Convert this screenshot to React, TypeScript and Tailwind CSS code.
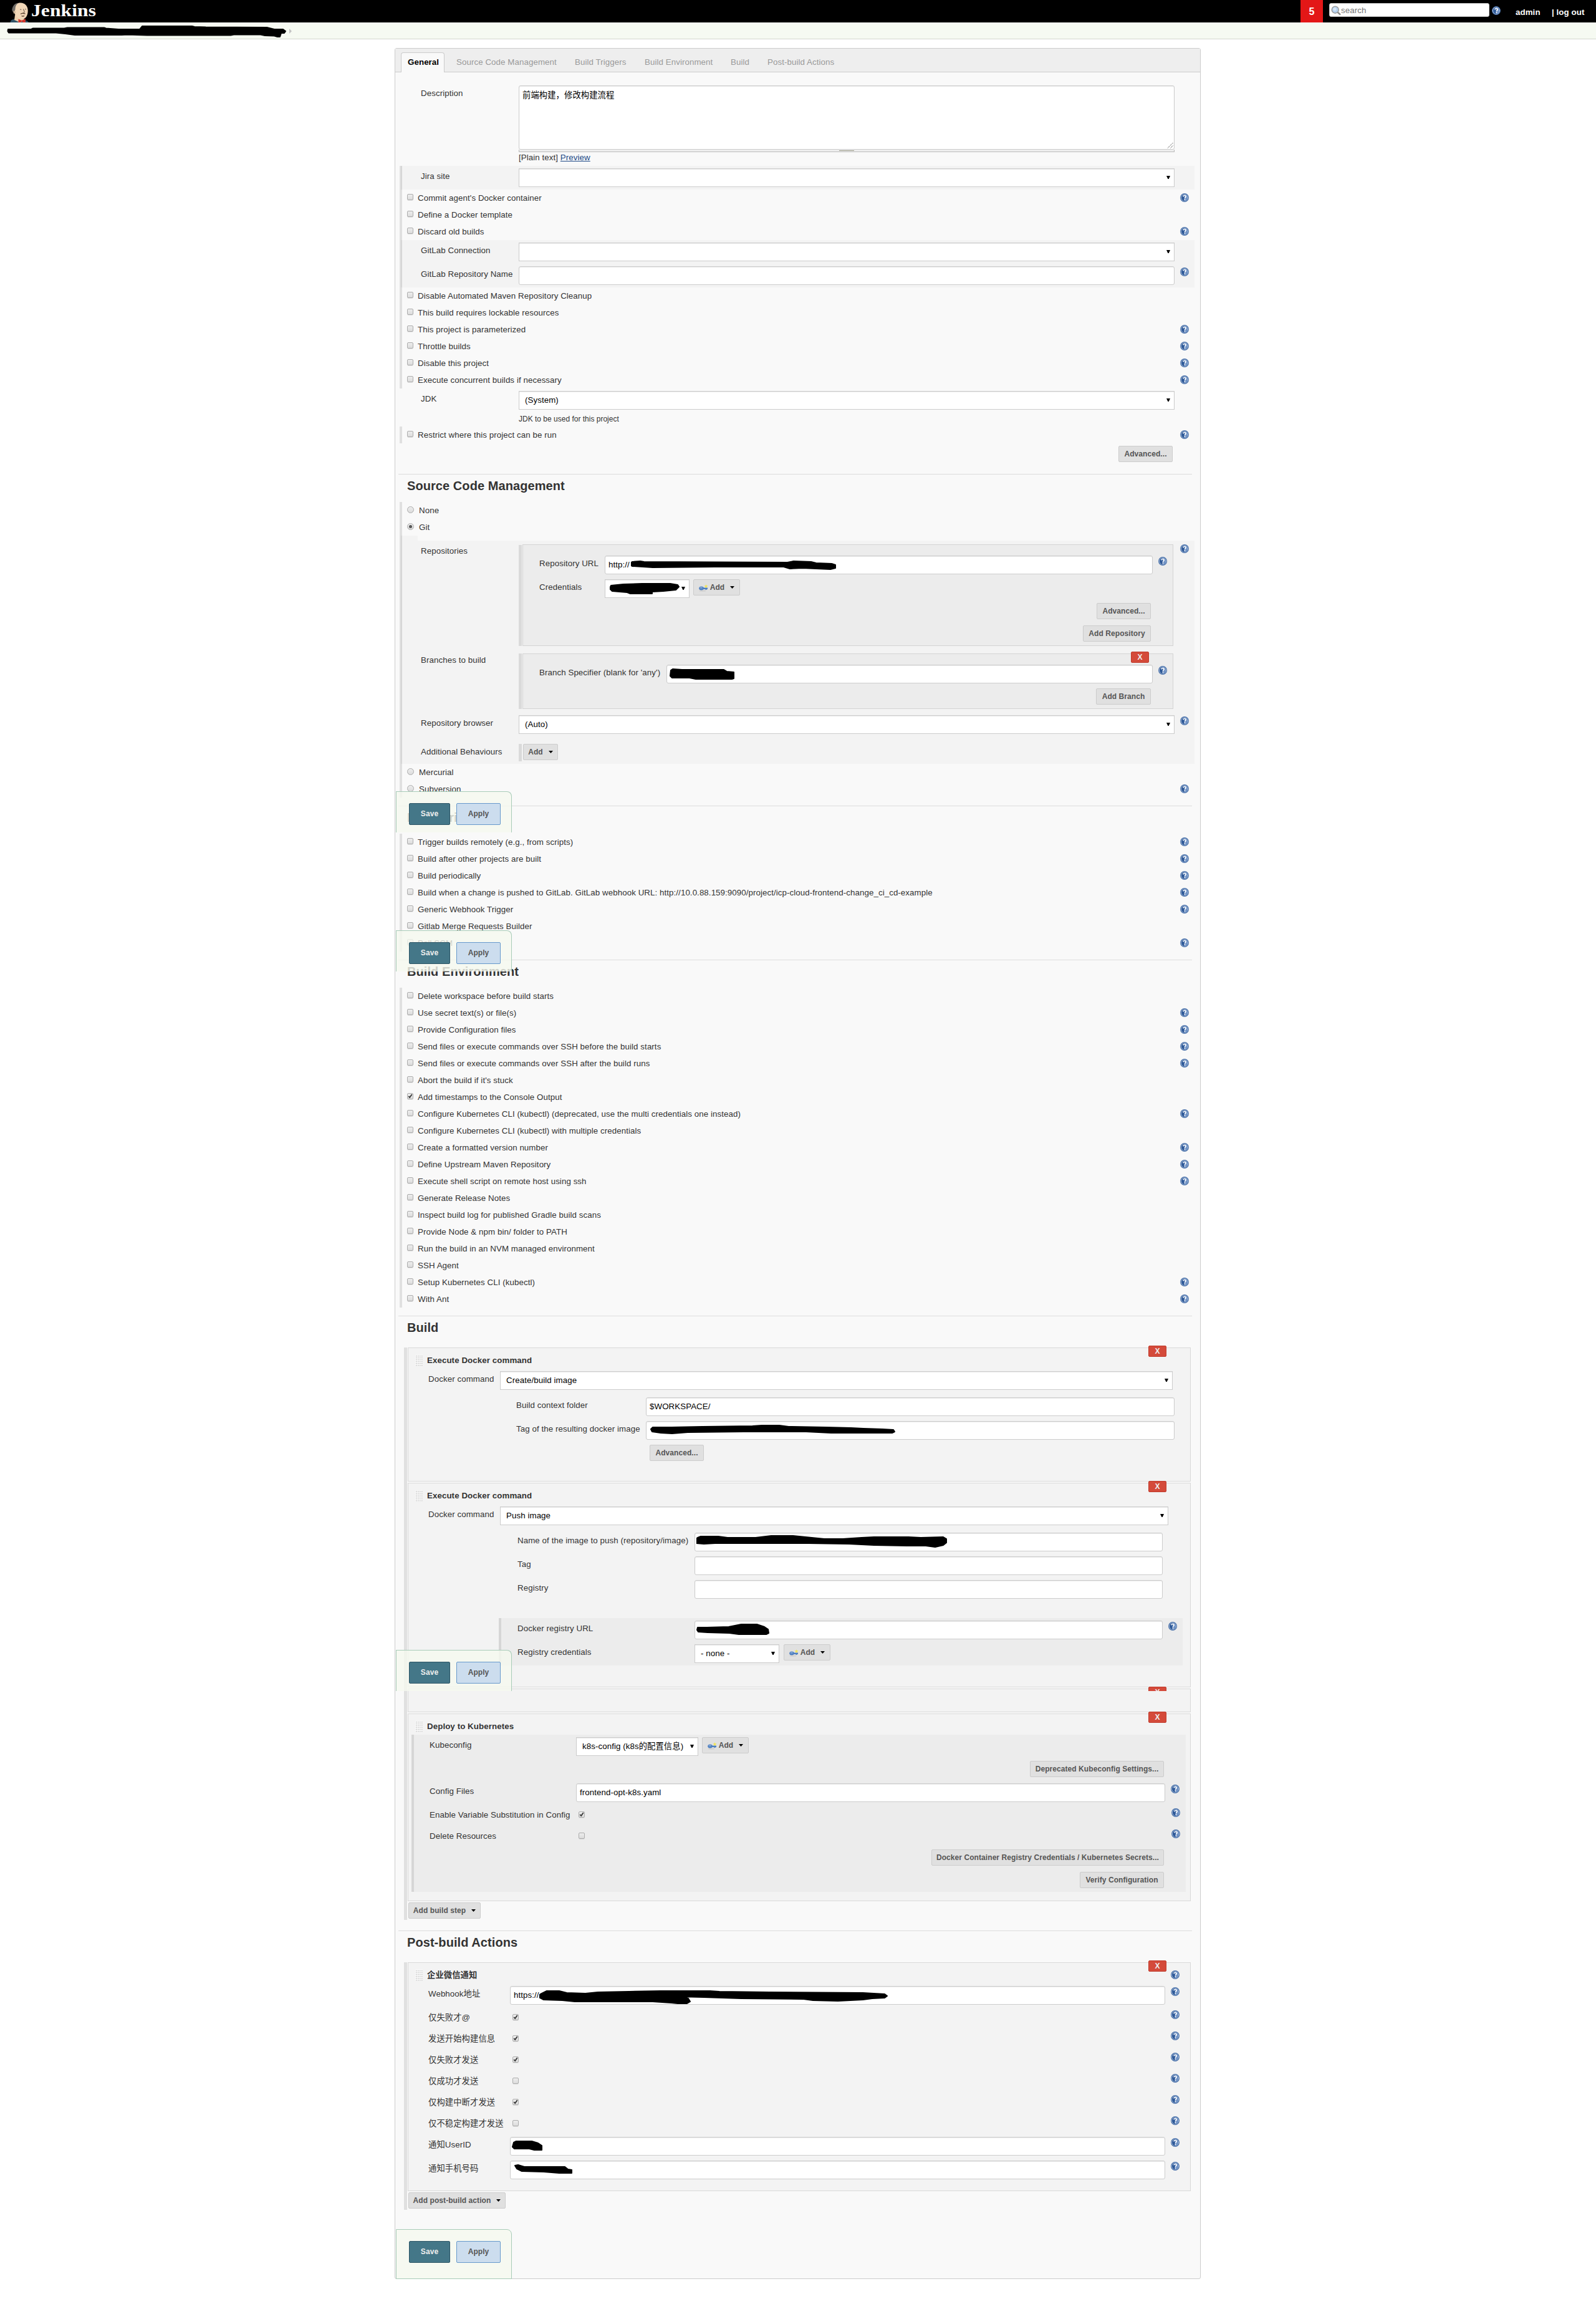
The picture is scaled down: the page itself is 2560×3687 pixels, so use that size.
import React from "react";

type Kids = { children?: React.ReactNode };

function Help({ className = "mt-1.5" }: { className?: string }) {
  return (
    <svg viewBox="0 0 16 16" className={"size-3.5 shrink-0 " + className}>
      <circle cx="8" cy="8" r="7.300" fill="#dfe8f4" stroke="#3f69a5" strokeWidth="1.300" />
      <circle cx="8" cy="8" r="5.900" fill="#2f5a99" />
      <path d="M8 2.100a5.900 5.900 0 0 1 5.900 5.900A5.900 5.900 0 0 1 8 13.900z" fill="#7093c6" />
      <path
        d="M5.700 6.200C5.800 4.700 6.800 4 8.100 4c1.400 0 2.400.8 2.400 2 0 1.500-2.100 1.700-2.100 3.300"
        fill="none"
        stroke="#fff"
        strokeWidth="1.800"
      />
      <rect x="7.400" y="10.500" width="2" height="1.900" fill="#fff" />
    </svg>
  );
}

function Checkbox({ checked, className = "" }: { checked?: boolean; className?: string }) {
  return (
    <span
      className={
        "flex size-2.5 shrink-0 items-center justify-center rounded-[2px] border border-[#acacac] bg-linear-to-b from-[#ededed] to-[#dcdcdc] shadow-[0_1px_0_rgba(0,0,0,0.08)] " +
        className
      }
    >
      {checked && (
        <svg viewBox="0 0 9 9" className="size-2 shrink-0">
          <path d="M1.400 4.500 3.600 6.900 7.600 1.200" fill="none" stroke="#333" strokeWidth="2" />
        </svg>
      )}
    </span>
  );
}

function Radio({ checked }: { checked?: boolean }) {
  return (
    <span className="mt-[7px] ml-2 flex size-[11px] shrink-0 items-center justify-center rounded-full border border-[#acacac] bg-linear-to-b from-[#ededed] to-[#dcdcdc]">
      {checked && <span className="size-[5px] rounded-full bg-[#555]" />}
    </span>
  );
}

function CheckRow({ text, help, checked }: { text: string; help?: boolean; checked?: boolean }) {
  return (
    <div className="flex h-[27px] items-start border-l-2 border-[#e0e0e0]">
      <Checkbox checked={checked} className="mt-[7px] ml-2" />
      <span className="ml-[7px] pt-[5px]">{text}</span>
      {help && <Help className="mt-1.5 mr-[9px] ml-auto" />}
    </div>
  );
}

function RadioRow({ text, help, checked }: { text: string; help?: boolean; checked?: boolean }) {
  return (
    <div className="flex h-[27px] items-start border-l-2 border-[#e0e0e0]">
      <Radio checked={checked} />
      <span className="ml-2 pt-[5px]">{text}</span>
      {help && <Help className="mt-1.5 mr-[9px] ml-auto" />}
    </div>
  );
}

function Input({ className, children }: { className: string } & Kids) {
  return (
    <div
      className={
        "mt-1 flex h-[30px] shrink-0 items-start rounded-[3px] border border-[#ccc] bg-white pt-[5px] pl-[5px] text-black shadow-[inset_0_1px_1px_rgba(0,0,0,0.09)] " +
        className
      }
    >
      {children}
    </div>
  );
}

function Select({ className, children }: { className: string } & Kids) {
  return (
    <div
      className={
        "mt-1 flex h-[30px] shrink-0 items-start border border-[#ccc] bg-white pt-[5px] pr-1.5 pl-[9px] text-black shadow-[inset_0_1px_1px_rgba(0,0,0,0.09)] " +
        className
      }
    >
      {children}
      <svg viewBox="0 0 6 5" className="mt-1.5 ml-auto h-[5px] w-1.5 shrink-0">
        <path d="M0 0h6L3.700 5H2.300z" fill="#000" />
      </svg>
    </div>
  );
}

function Caret({ className }: { className: string }) {
  return (
    <svg viewBox="0 0 7 4" className={"h-1 w-[7px] shrink-0 " + className}>
      <path d="M0 0h7L3.500 4z" fill="#000" />
    </svg>
  );
}

function Button({ className, children }: { className: string } & Kids) {
  return (
    <button
      className={
        "flex h-[26px] shrink-0 items-center justify-center rounded-[2px] border border-[#ccc] bg-[#e0e0e0] text-[12px] font-bold whitespace-nowrap text-[#555] " +
        className
      }
    >
      {children}
    </button>
  );
}

function AddKeyButton({ className = "" }: { className?: string }) {
  return (
    <Button className={"mt-1 w-[75px] " + className}>
      <svg viewBox="0 0 15 13" className="mt-0.5 h-[13px] w-[15px] shrink-0">
        <ellipse cx="6" cy="10.500" rx="5.500" ry="1.200" fill="#cfcfcf" />
        <path d="M6 5.500h8v2.400h-1.500v1h-2v-1H6z" fill="#4d7fc0" />
        <ellipse cx="4" cy="6.500" rx="3.800" ry="2.900" fill="#4d7fc0" />
        <ellipse cx="3.700" cy="5.700" rx="2.300" ry="1.100" fill="#86a9d6" />
        <path d="m11.500.2.900 1.900 2.100.4-1.600 1.300.300 2-1.700-1-1.800 1 .4-2L8.600 2.500l2-.4z" fill="#f0e45a" />
      </svg>
      <span className="ml-[3px]">Add</span>
      <Caret className="ml-[9px]" />
    </Button>
  );
}

function Scribble({ box, d, className }: { box: string; d: string; className: string }) {
  return (
    <svg viewBox={box} className={"shrink-0 " + className}>
      <path d={d} fill="#000" stroke="#000" strokeWidth="2" strokeLinejoin="round" />
    </svg>
  );
}

function Field({
  label,
  labelClass,
  rowClass = "h-[38px]",
  children,
}: { label?: string; labelClass: string; rowClass?: string } & Kids) {
  return (
    <div className={"flex items-start " + rowClass}>
      <span className={"shrink-0 pt-2 " + labelClass}>{label}</span>
      {children}
    </div>
  );
}

function Remove({ className = "h-[18px]" }: { className?: string }) {
  return (
    <div className={"absolute -top-1 right-[38px] w-[29px] overflow-hidden " + className}>
      <div className="flex h-[18px] items-center justify-center rounded-[2px] border border-[#c03b2c] bg-[#d44a3a] text-[12px] leading-none font-bold text-[#eee]">
        X
      </div>
    </div>
  );
}

function Grip() {
  return (
    <svg viewBox="0 0 12 18" className="mt-[11px] ml-[11px] h-[18px] w-3 shrink-0">
      <defs>
        <pattern id="grip" width="3" height="3" patternUnits="userSpaceOnUse">
          <rect width="3" height="3" fill="#fafafa" />
          <rect x="1" y="1" width="1.500" height="1.500" fill="#c4c4c4" />
        </pattern>
      </defs>
      <rect width="12" height="18" fill="url(#grip)" />
    </svg>
  );
}

function Step({ title, className, help, children }: { title?: string; className: string; help?: boolean } & Kids) {
  return (
    <div className={"relative w-[1256px] border border-[#d9d9d9] bg-[#f3f3f3] " + className}>
      {title && (
        <div className="flex h-[33px] items-start">
          <Grip />
          <b className="ml-[7px] pt-[11px]">{title}</b>
          {help && <Help className="mt-3 mr-[17px] ml-auto" />}
        </div>
      )}
      {children}
    </div>
  );
}

function Heading({ children }: Kids) {
  return (
    <div className="ml-[5px] h-[45px] w-[1273px] border-t border-[#ddd] pt-[7px] pl-3.5">
      <h2 className="text-[20px] leading-[23px] font-bold">{children}</h2>
    </div>
  );
}

function SaveBar({ className }: { className: string }) {
  return (
    <div
      className={
        "flex w-[186px] items-start rounded-tr-lg border-t border-r border-l border-[#a8ccb8] bg-[#f5f9ef]/80 pt-[18px] pl-5 " +
        className
      }
    >
      <button className="flex h-[35px] w-[66px] items-center justify-center rounded-[2px] border border-[#2c5566] bg-[#447788] text-[12px] font-bold text-[#eee]">
        Save
      </button>
      <button className="ml-2.5 flex h-[35px] w-[71px] items-center justify-center rounded-[2px] border border-[#6699cc] bg-[#ccddee] text-[12px] font-bold text-[#555]">
        Apply
      </button>
    </div>
  );
}

function Header() {
  return (
    <header className="flex h-9 items-start bg-black text-white">
      <svg viewBox="16 0 144 36" className="ml-4 h-9 w-36 shrink-0">
        <path d="M16.500 36c.3-3.300 2.800-4.600 6.500-5.500l12 1.500c5 .4 9.500.8 11 4z" fill="#2f5266" />
        <path d="M24 24l-1 8 9 4 7-3-1-6z" fill="#ecd0ae" />
        <path d="M22 12C23 6.500 28 4.600 33 4.600c7 0 11.500 5 11.700 12 .2 6.500-2.500 13.900-8.700 13.900-6.500 0-11.500-4.500-13-10z" fill="#f0d6b7" />
        <path d="M22.500 20c-3-1-4-4-2.500-7.500C21.500 8 25 5 29.500 4.800 25.500 7.500 24.500 11 24.500 15z" fill="#6d6a66" />
        <path d="M21.300 17.500c1.400-.6 2.700.5 2.700 2.300s-1 2.400-2 1.700z" fill="#f0d6b7" stroke="#6b5a48" strokeWidth=".6" />
        <path d="M37.500 14.500c.5 2 2 4 1.500 5.500-.4 1-1.700.9-2.500.5M32 15.500c.8-.6 1.700-.5 2.300 0M40 15c.8-.5 1.500-.4 2 .1" fill="none" stroke="#4a3a2c" strokeWidth=".9" />
        <path d="M33 22.500c2-1.500 5-1.300 7.500-.3M34.500 25.500c1.500.7 3.300.6 4.500-.2" fill="none" stroke="#5b4331" strokeWidth="1.300" />
        <path d="M29.500 30.500l5 2.200 1.500-.5 5-2-.2 5.800h-4l-1.800-2-2 2h-3.500z" fill="#d0352b" />
        <text
          x="50"
          y="25.500"
          fontSize="27.500"
          fontWeight="bold"
          fontFamily="Liberation Serif, serif"
          fill="#fff"
          textLength="104"
          lengthAdjust="spacingAndGlyphs"
        >
          Jenkins
        </text>
      </svg>
      <div className="ml-auto flex h-9 w-9 shrink-0 items-center justify-center bg-[#e31717] text-[16px] font-bold">5</div>
      <div className="mt-[5px] ml-2.5 flex h-[22px] w-[257px] shrink-0 items-start rounded-[3px] border border-[#ccc] bg-white pt-[3px] pl-0.5">
        <svg viewBox="0 0 16 16" className="size-4 shrink-0">
          <path d="m10.500 10.500 3.700 3.400" stroke="#8b8b8b" strokeWidth="2.600" strokeLinecap="round" />
          <circle cx="6.700" cy="6.700" r="5.500" fill="#b4d0ee" stroke="#9a9a9a" strokeWidth="1.500" />
          <circle cx="6" cy="5.800" r="2.600" fill="#d6e6f7" />
        </svg>
        <span className="-mt-px text-[#757575]">search</span>
      </div>
      <Help className="mt-2.5 ml-1" />
      <b className="mt-[11px] ml-6 w-[58px] shrink-0">admin</b>
      <b className="mt-[11px] w-[71px] shrink-0">| log out</b>
    </header>
  );
}

function GeneralSection() {
  return (
    <>
      <div className="mt-[17px] flex h-[133px] items-start">
        <span className="w-[198px] shrink-0 pt-2 pl-[41px]">Description</span>
        <div className="mt-1 w-[1052px] shrink-0">
          <div className="flex h-[103px] items-start justify-between rounded-[3px] border border-[#ccc] bg-white pt-1.5 pl-[5px] text-black shadow-[inset_0_1px_1px_rgba(0,0,0,0.09)]">
            <span>前端构建，修改构建流程</span>
            <svg viewBox="0 0 10 10" className="mr-px mb-px size-2.5 self-end">
              <path d="M1 9.500 9.500 1M5.500 9.500l4-4" stroke="#555" strokeWidth="1" strokeDasharray="1.400 .7" />
            </svg>
          </div>
          <div className="flex h-1 items-start justify-center border-x border-b border-[#bbb] bg-[#eee]">
            <span className="mt-px h-px w-6 bg-[#999988]" />
          </div>
          <div>
            [Plain text] <a className="text-[#204a87] underline">Preview</a>
          </div>
        </div>
      </div>

      <div className="ml-[7px] w-[1275px] border-l-2 border-[#e0e0e0]">
        <div className="border-l-2 border-[#d6d6d6] bg-[#f3f3f3]">
          <Field label="Jira site" labelClass="w-[187px] pl-[30px]">
            <Select className="w-[1052px]" />
          </Field>
        </div>
        <CheckRow text="Commit agent's Docker container" help />
        <CheckRow text="Define a Docker template" />
        <CheckRow text="Discard old builds" help />
        <div className="border-l-2 border-[#d6d6d6] bg-[#f3f3f3]">
          <Field label="GitLab Connection" labelClass="w-[187px] pl-[30px]">
            <Select className="w-[1052px]" />
          </Field>
          <Field label="GitLab Repository Name" labelClass="w-[187px] pl-[30px]">
            <Input className="w-[1052px]" />
            <Help className="mt-1.5 ml-[9px]" />
          </Field>
        </div>
        <CheckRow text="Disable Automated Maven Repository Cleanup" />
        <CheckRow text="This build requires lockable resources" />
        <CheckRow text="This project is parameterized" help />
        <CheckRow text="Throttle builds" help />
        <CheckRow text="Disable this project" help />
        <CheckRow text="Execute concurrent builds if necessary" help />
      </div>
      <Field label="JDK" labelClass="w-[198px] pl-[41px]">
        <Select className="w-[1052px]">(System)</Select>
      </Field>
      <div className="h-[23px] pt-1 pl-[198px] text-[12px] leading-[14px] tracking-normal">JDK to be used for this project</div>
      <div className="ml-[7px] w-[1275px] border-l-2 border-[#e0e0e0]">
        <CheckRow text="Restrict where this project can be run" help />
      </div>
      <div className="flex h-[49px] w-[1247px] items-start justify-end pt-1">
        <Button className="w-[87px]">Advanced...</Button>
      </div>
    </>
  );
}

function ScmSection() {
  return (
    <>
      <Heading>Source Code Management</Heading>
      <div className="ml-[7px] w-[1275px] border-l-2 border-[#e0e0e0]">
        <RadioRow text="None" />
        <RadioRow text="Git" checked />
        <div className="border-l-2 border-[#d6d6d6]">
          <div className="h-2 w-[25px] bg-[#f3f3f3]" />
          <div className="h-[358px] bg-[#f3f3f3]">
            <Field label="Repositories" labelClass="w-[187px] pl-[30px]" rowClass="h-[175px]">
              <div className="mt-[7px] h-[162px] w-[5px] shrink-0 bg-[#dadada]" />
              <div className="mt-1.5 ml-px h-[163px] w-[1044px] shrink-0 border border-[#d3d3d3] bg-[#ececec] pt-[13px]">
                <Field label="Repository URL" labelClass="w-[131px] pl-[26px]">
                  <Input className="w-[879px]">
                    http://
                    <Scribble
                      className="ml-0.5 h-[18px] w-[332px]"
                      box="1010 898 332 18"
                      d="M1012 902l13-1 6 1 230 1 10-2 28 1 8 2 25 1 6 2 0 5-8 2-45-2-20 1-10-3-110 0-100 1-33-2-4-3z"
                    />
                  </Input>
                  <Help className="mt-1.5 ml-[9px]" />
                </Field>
                <Field label="Credentials" labelClass="w-[131px] pl-[26px]">
                  <Select className="w-[136px]">
                    <Scribble
                      className="-mt-px -ml-0.5 h-5 w-[113px]"
                      box="977 936 113 20"
                      d="M979 941l20-2 30-1 45 0 12 2 2 3-5 5-20 2-18 1 0 3-35 0-5-2-24-2-4-4z"
                    />
                  </Select>
                  <AddKeyButton className="ml-1.5" />
                </Field>
                <div className="flex h-9 justify-end pt-1 pr-[35px]">
                  <Button className="w-[87px]">Advanced...</Button>
                </div>
                <div className="flex h-9 justify-end pt-1 pr-[35px]">
                  <Button className="w-[109px]">Add Repository</Button>
                </div>
              </div>
              <Help className="mt-1.5 ml-[11px]" />
            </Field>
            <Field label="Branches to build" labelClass="w-[187px] pl-[30px]" rowClass="h-[101px]">
              <div className="mt-1.5 h-[89px] w-[5px] shrink-0 bg-[#dadada]" />
              <div className="relative mt-1.5 ml-px h-[89px] w-[1044px] shrink-0 border border-[#d3d3d3] bg-[#ececec] pt-[13px]">
                <Remove />
                <Field label="Branch Specifier (blank for 'any')" labelClass="w-[230px] pl-[26px]">
                  <Input className="w-[780px]">
                    <Scribble
                      className="-mt-px -ml-px h-5 w-[105px]"
                      box="1074 1071 105 20"
                      d="M1076 1075l3-2 15 1 67 0 5 3 11 1 0 10-3 1-58 0-10-2-28 0-3-3z"
                    />
                  </Input>
                  <Help className="mt-1.5 ml-[9px]" />
                </Field>
                <div className="flex h-9 justify-end pt-1 pr-[35px]">
                  <Button className="w-[88px]">Add Branch</Button>
                </div>
              </div>
            </Field>
            <Field label="Repository browser" labelClass="w-[187px] pl-[30px]" rowClass="h-[46px]">
              <Select className="w-[1052px]">(Auto)</Select>
              <Help className="mt-1.5 ml-[9px]" />
            </Field>
            <Field label="Additional Behaviours" labelClass="w-[187px] pl-[30px]" rowClass="h-9">
              <div className="mt-1 h-7 w-[5px] shrink-0 bg-[#dadada]" />
              <Button className="mt-1 ml-0.5 w-14">
                <span>Add</span>
                <Caret className="ml-[9px]" />
              </Button>
            </Field>
          </div>
        </div>
        <RadioRow text="Mercurial" />
        <RadioRow text="Subversion" help />
      </div>
    </>
  );
}

function CheckSection({ title, rows }: { title: string; rows: { text: string; help?: boolean; checked?: boolean }[] }) {
  return (
    <div className="mt-[13px]">
      <Heading>{title}</Heading>
      <div className="ml-[7px] w-[1275px] border-l-2 border-[#e0e0e0]">
        {rows.map((r) => (
          <CheckRow key={r.text} text={r.text} help={r.help} checked={r.checked} />
        ))}
      </div>
    </div>
  );
}

const triggers = [
  { text: "Trigger builds remotely (e.g., from scripts)", help: true },
  { text: "Build after other projects are built", help: true },
  { text: "Build periodically", help: true },
  {
    text: "Build when a change is pushed to GitLab. GitLab webhook URL: http://10.0.88.159:9090/project/icp-cloud-frontend-change_ci_cd-example",
    help: true,
  },
  { text: "Generic Webhook Trigger", help: true },
  { text: "Gitlab Merge Requests Builder" },
  { text: "Poll SCM", help: true },
];

const environment = [
  { text: "Delete workspace before build starts" },
  { text: "Use secret text(s) or file(s)", help: true },
  { text: "Provide Configuration files", help: true },
  { text: "Send files or execute commands over SSH before the build starts", help: true },
  { text: "Send files or execute commands over SSH after the build runs", help: true },
  { text: "Abort the build if it's stuck" },
  { text: "Add timestamps to the Console Output", checked: true },
  { text: "Configure Kubernetes CLI (kubectl) (deprecated, use the multi credentials one instead)", help: true },
  { text: "Configure Kubernetes CLI (kubectl) with multiple credentials" },
  { text: "Create a formatted version number", help: true },
  { text: "Define Upstream Maven Repository", help: true },
  { text: "Execute shell script on remote host using ssh", help: true },
  { text: "Generate Release Notes" },
  { text: "Inspect build log for published Gradle build scans" },
  { text: "Provide Node & npm bin/ folder to PATH" },
  { text: "Run the build in an NVM managed environment" },
  { text: "SSH Agent" },
  { text: "Setup Kubernetes CLI (kubectl)", help: true },
  { text: "With Ant", help: true },
];

function BuildSection() {
  return (
    <div className="mt-[13px]">
      <Heading>Build</Heading>
      <div className="mt-1.5 ml-3.5 flex h-[918px] items-stretch">
        <div className="w-[5px] shrink-0 bg-[#e0e0e0]" />
        <div className="ml-px flex flex-col items-start gap-0.5">
          <Step title="Execute Docker command" className="h-[215px]">
            <Remove />
            <Field label="Docker command" labelClass="w-[147px] pl-[32px]" rowClass="h-[42px]">
              <Select className="w-[1079px]">Create/build image</Select>
            </Field>
            <Field label="Build context folder" labelClass="w-[381px] pl-[173px]">
              <Input className="w-[848px]">$WORKSPACE/</Input>
            </Field>
            <Field label="Tag of the resulting docker image" labelClass="w-[381px] pl-[173px]">
              <Input className="w-[848px]">
                <Scribble
                  className="-mt-0.5 h-5 w-[397px]"
                  box="1043 2284 397 20"
                  d="M1045 2293l3-3 30 0 50-1 80-1 15-1 28 0 15 2 60 1 40 1 20 1 30 1 18 1 2 3-4 2-98 0-40-2-100 0-90 1-25 2-18-1-14-2z"
                />
              </Input>
            </Field>
            <div className="pt-1 pl-[387px]">
              <Button className="w-[87px]">Advanced...</Button>
            </div>
          </Step>

          <Step title="Execute Docker command" className="h-[328px]">
            <Remove />
            <Field label="Docker command" labelClass="w-[147px] pl-[32px]" rowClass="h-[42px]">
              <Select className="w-[1072px]">Push image</Select>
            </Field>
            <Field label="Name of the image to push (repository/image)" labelClass="w-[459px] pl-[175px]">
              <Input className="w-[751px]">
                <Scribble
                  className="-mt-[3px] -ml-[3px] h-[22px] w-[404px]"
                  box="1117 2461 404 22"
                  d="M1119 2466l5-2 28 0 15 2 45 0 25-3 35 0 20 2 30 3 30 0 30-2 20-1 55 0 20 1 36-1 5 3 0 6-5 4-13 3-15-2-30 0-53-1-40-2-65-1-25 0-25 0-100 0-18 1-13-1-3-4z"
                />
              </Input>
            </Field>
            <Field label="Tag" labelClass="w-[459px] pl-[175px]">
              <Input className="w-[751px]" />
            </Field>
            <Field label="Registry" labelClass="w-[459px] pl-[175px]">
              <Input className="w-[751px]" />
            </Field>
            <div className="mt-[27px] ml-[145px] w-[1097px] border-l-4 border-[#d6d6d6] bg-[#ececec]">
              <Field label="Docker registry URL" labelClass="w-[310px] pl-[26px]">
                <Input className="w-[751px]">
                  <Scribble
                    className="-mt-0.5 -ml-[3px] h-5 w-[119px]"
                    box="1117 2602 119 20"
                    d="M1119 2609l15 0 35-1 20-4 25 0 12 4 6 4 1 6-4 2-44 0-15-2-35-1-15-1-2-3z"
                  />
                </Input>
                <Help className="mt-1.5 ml-[9px]" />
              </Field>
              <Field label="Registry credentials" labelClass="w-[310px] pl-[26px]">
                <Select className="w-[136px]">- none -</Select>
                <AddKeyButton className="ml-[7px]" />
              </Field>
            </div>
          </Step>

          <Step className="h-[38px]">
            <Remove className="h-[7px]" />
          </Step>

          <Step title="Deploy to Kubernetes" className="h-[301px]">
            <Remove />
            <div className="ml-[5px] w-[1242px] border-l-4 border-[#d6d6d6] bg-[#ececec]">
              <Field label="Kubeconfig" labelClass="w-[260px] pl-[25px]">
                <Select className="w-[196px]">
                  <span>k8s-config (k8s的配置信息)</span>
                </Select>
                <AddKeyButton className="ml-1.5" />
              </Field>
              <div className="flex h-9 justify-end pt-1 pr-[35px]">
                <Button className="w-[215px]">Deprecated Kubeconfig Settings...</Button>
              </div>
              <Field label="Config Files" labelClass="w-[260px] pl-[25px]">
                <Input className="w-[945px]">frontend-opt-k8s.yaml</Input>
                <Help className="mt-1.5 ml-[9px]" />
              </Field>
              <Field label="Enable Variable Substitution in Config" labelClass="w-[264px] pl-[25px]" rowClass="h-[34px]">
                <Checkbox checked className="mt-[11px]" />
                <Help className="mt-1.5 mr-[9px] ml-auto" />
              </Field>
              <Field label="Delete Resources" labelClass="w-[264px] pl-[25px]" rowClass="h-[34px]">
                <Checkbox className="mt-[11px]" />
                <Help className="mt-1.5 mr-[9px] ml-auto" />
              </Field>
              <div className="flex h-9 justify-end pt-1 pr-[35px]">
                <Button className="w-[373px]">Docker Container Registry Credentials / Kubernetes Secrets...</Button>
              </div>
              <div className="flex h-9 justify-end pt-1 pr-[35px]">
                <Button className="w-[135px]">Verify Configuration</Button>
              </div>
            </div>
          </Step>
          <Button className="ml-px w-[116px]">
            <span>Add build step</span>
            <Caret className="ml-[9px]" />
          </Button>
        </div>
      </div>
    </div>
  );
}

const notifyFlags = [
  { text: "仅失败才@", checked: true },
  { text: "发送开始构建信息", checked: true },
  { text: "仅失败才发送", checked: true },
  { text: "仅成功才发送", checked: false },
  { text: "仅构建中断才发送", checked: true },
  { text: "仅不稳定构建才发送", checked: false },
];

function PostBuildSection() {
  return (
    <div className="mt-[17px]">
      <Heading>Post-build Actions</Heading>
      <div className="mt-1.5 ml-3.5 flex h-[397px] items-stretch">
        <div className="w-[5px] shrink-0 bg-[#e0e0e0]" />
        <div className="ml-px flex flex-col items-start gap-0.5">
          <Step title="企业微信通知" className="h-[367px]" help>
            <Remove />
            <Field label="Webhook地址" labelClass="w-[163px] pl-[32px]">
              <Input className="w-[1051px]">
                https://
                <Scribble
                  className="h-6 w-[563px]"
                  box="862 3191 563 24"
                  d="M864 3198l10-5 20 0 12 3 30 1 20-2 50-1 50-1 80 0 15 1 80 1 150 1 35 2 4 3-4 3-20 1-15 2-40 2-40-1-15-2-100-1-60-2-40-1 15 3 3 5-5 3-15 0-10-1-30-2-40 0-60 0-25 0-20-2-30-1-10-5z"
                />
              </Input>
              <Help className="mt-1.5 ml-[9px]" />
            </Field>
            {notifyFlags.map((f) => (
              <Field key={f.text} label={f.text} labelClass="w-[167px] pl-[32px]" rowClass="h-[34px]">
                <Checkbox checked={f.checked} className="mt-[11px]" />
                <Help className="mt-[5px] mr-[17px] ml-auto" />
              </Field>
            ))}
            <Field label="通知UserID" labelClass="w-[163px] pl-[32px]">
              <Input className="w-[1051px]">
                <Scribble
                  className="-mt-px -ml-[3px] h-[19px] w-[51px]"
                  box="821 3433 51 19"
                  d="M824 3437l4-2 25 0 10 3 6 4 0 7-12 0-8-2-24 0-3-3z"
                />
              </Input>
              <Help className="mt-1.5 ml-[9px]" />
            </Field>
            <Field label="通知手机号码" labelClass="w-[163px] pl-[32px]">
              <Input className="w-[1051px]">
                <Scribble
                  className="h-4 w-24"
                  box="824 3471 96 16"
                  d="M826 3473l5-1 10 3 65 0 5 4 6 1 0 5-20 0-25-2-35-1-8-4z"
                />
              </Input>
              <Help className="mt-1.5 ml-[9px]" />
            </Field>
          </Step>
          <Button className="ml-px w-[156px]">
            <span>Add post-build action</span>
            <Caret className="ml-[9px]" />
          </Button>
        </div>
      </div>
    </div>
  );
}

export default function App() {
  return (
    <div className="h-[3687px] w-[2560px] bg-white font-['Liberation_Sans','Noto_Sans_CJK_SC',sans-serif] text-[13.333px] leading-[17px] tracking-[0.07px] whitespace-nowrap text-[#333]">
      <Header />
      <nav className="flex h-[27px] items-start border-b border-[#d3d7cf] bg-[#f6faf2]">
        <Scribble
          className="h-[26px] w-[462px]"
          box="0 36 462 26"
          d="M13 47H50L53 45.500H103L108 44.500H167L170 45.500 190 47H224L228 42H308L312 43 330 43.500 428 44 440 47H454L458 50 456 53H451L449 59H445L440 57.500 425 57 418 55.500H375L370 56.500H236L205 55.500 195 56H120L105 54 90 52.500H14L12.500 50z"
        />
        <svg viewBox="0 0 5 8" className="mt-2.5 ml-0.5 h-2 w-[5px]">
          <path d="M0 0l4 4-4 4z" fill="#c3c3c3" />
        </svg>
      </nav>

      <main className="relative mt-3.5 ml-[633px] h-[3578px] w-[1293px] rounded-[3px] border border-[#ccc] bg-[#f9f9f9]">
        <div className="flex h-[38px] items-end border-b border-[#ccc] bg-[#eee] pl-[9px] text-[#999]">
          <div className="-mb-px h-8 w-[70px] rounded-t-[4px] border-x border-t border-[#ccc] bg-[#f9f9f9] pt-1.5 pl-2.5 font-bold text-black">
            General
          </div>
          <span className="ml-[19px] h-[31px] w-[190px] pt-[7px]">Source Code Management</span>
          <span className="h-[31px] w-[112px] pt-[7px]">Build Triggers</span>
          <span className="h-[31px] w-[138px] pt-[7px]">Build Environment</span>
          <span className="h-[31px] w-[59px] pt-[7px]">Build</span>
          <span className="h-[31px] pt-[7px]">Post-build Actions</span>
        </div>
        <GeneralSection />
        <ScmSection />
        <CheckSection title="Build Triggers" rows={triggers} />
        <CheckSection title="Build Environment" rows={environment} />
        <BuildSection />
        <PostBuildSection />
        <SaveBar className="mt-[31px] ml-px h-20 border-b" />
        <SaveBar className="absolute top-[1191px] left-px h-[66px]" />
        <SaveBar className="absolute top-[1414px] left-px h-[66px]" />
        <SaveBar className="absolute top-[2568px] left-px h-[66px]" />
      </main>
    </div>
  );
}
